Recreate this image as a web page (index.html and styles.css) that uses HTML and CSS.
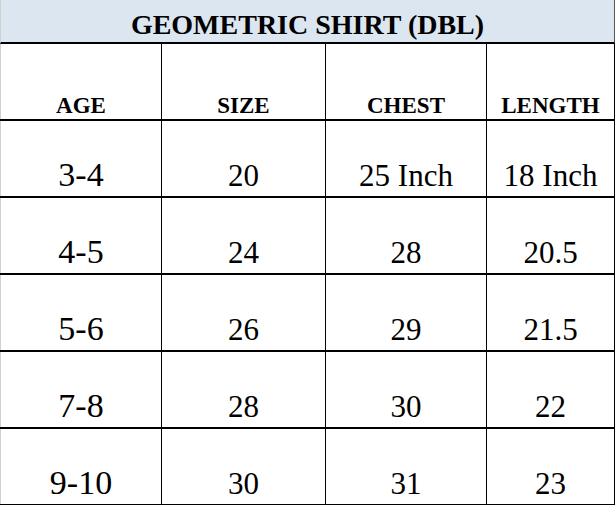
FILE: index.html
```html
<!DOCTYPE html>
<html>
<head>
<meta charset="utf-8">
<link rel="stylesheet" href="styles.css">
</head>
<body>
<div class="sheet">
  <div class="title">GEOMETRIC SHIRT (DBL)</div>
  <div class="row head">
    <div class="cell c1">AGE</div>
    <div class="cell c2">SIZE</div>
    <div class="cell c3">CHEST</div>
    <div class="cell c4">LENGTH</div>
  </div>
  <div class="row">
    <div class="cell c1 age">3-4</div>
    <div class="cell c2">20</div>
    <div class="cell c3">25 Inch</div>
    <div class="cell c4">18 Inch</div>
  </div>
  <div class="row">
    <div class="cell c1 age">4-5</div>
    <div class="cell c2">24</div>
    <div class="cell c3">28</div>
    <div class="cell c4">20.5</div>
  </div>
  <div class="row">
    <div class="cell c1 age">5-6</div>
    <div class="cell c2">26</div>
    <div class="cell c3">29</div>
    <div class="cell c4">21.5</div>
  </div>
  <div class="row">
    <div class="cell c1 age">7-8</div>
    <div class="cell c2">28</div>
    <div class="cell c3">30</div>
    <div class="cell c4">22</div>
  </div>
  <div class="row">
    <div class="cell c1 age">9-10</div>
    <div class="cell c2">30</div>
    <div class="cell c3">31</div>
    <div class="cell c4">23</div>
  </div>
</div>
</body>
</html>
```

FILE: styles.css
```css
* { box-sizing: border-box; }
html, body { margin: 0; padding: 0; background: #ffffff; }
.sheet {
  width: 615px;
  height: 505px;
  font-family: "Liberation Serif", "Times New Roman", serif;
  color: #000;
  overflow: hidden;
}
.title {
  height: 44px;
  background: #dce6f1;
  border-bottom: 2px solid #000;
  border-left: 1px solid #d0d0d0;
  border-right: 1px solid #555;
  font-size: 28px;
  font-weight: bold;
  line-height: 28px;
  text-align: center;
  padding-top: 11px;
}
.row {
  display: grid;
  grid-template-columns: 162px 164px 161px 128px;
  height: 77px;
  border-bottom: 2px solid #000;
}
.cell {
  display: flex;
  align-items: flex-end;
  justify-content: center;
  border-right: 1px solid #000;
  font-size: 31px;
  line-height: 31px;
  padding-bottom: 5px;
  white-space: nowrap;
}
.c1 { border-left: 1px solid #d0d0d0; }
.age { font-size: 34px; line-height: 34px; padding-bottom: 4px; }
.head .cell {
  font-size: 23px;
  line-height: 23px;
  font-weight: bold;
  padding-bottom: 2px;
}
```
